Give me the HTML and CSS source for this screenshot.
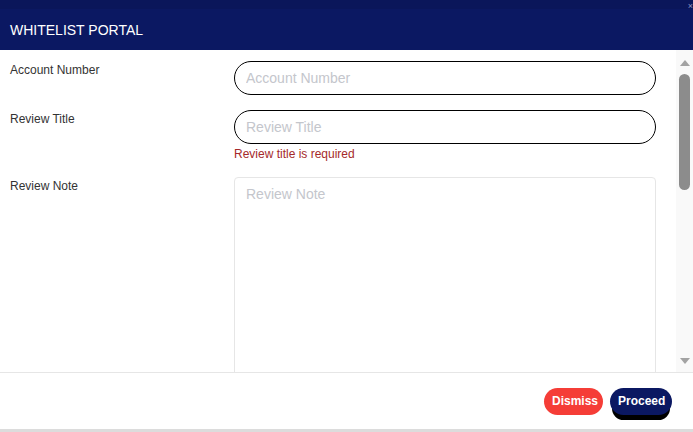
FILE: index.html
```html
<!DOCTYPE html>
<html lang="en">
<head>
    <meta charset="UTF-8">
    <meta name="viewport" content="width=device-width, initial-scale=1.0">
    <title>Whitelist Portal</title>
    <link rel="stylesheet" href="styles.css">
</head>
<body>
    <div class="modal">
        <div class="modal-header">
            <span class="modal-title">WHITELIST PORTAL</span>
            <span class="modal-close">&times;</span>
        </div>
        <div class="modal-body">
            <form class="review-form">
                <div class="form-row">
                    <label class="form-label">Account Number</label>
                    <div class="form-field">
                        <input class="form-input" type="text" placeholder="Account Number">
                    </div>
                </div>
                <div class="form-row">
                    <label class="form-label">Review Title</label>
                    <div class="form-field">
                        <input class="form-input" type="text" placeholder="Review Title">
                        <div class="form-error">Review title is required</div>
                    </div>
                </div>
                <div class="form-row">
                    <label class="form-label">Review Note</label>
                    <div class="form-field">
                        <textarea class="form-textarea" placeholder="Review Note"></textarea>
                    </div>
                </div>
            </form>
            <!-- scrollbar -->
            <div class="scrollbar">
                <span class="scroll-arrow up"></span>
                <div class="scroll-track"><div class="scroll-thumb"></div></div>
                <span class="scroll-arrow down"></span>
            </div>
        </div>
        <div class="modal-footer">
            <button class="btn btn-dismiss" type="button">Dismiss</button>
            <button class="btn btn-proceed" type="button">Proceed</button>
        </div>
    </div>
</body>
</html>
```

FILE: styles.css
```css
* {
    margin: 0;
    padding: 0;
    box-sizing: border-box;
}
body {
    font-family: "Liberation Sans", Arial, sans-serif;
    background: #fff;
    width: 693px;
    height: 432px;
    overflow: hidden;
}
.modal {
    display: flex;
    flex-direction: column;
    height: 432px;
    border-bottom: 3px solid #dcdcdc;
}
.modal-header {
    height: 50px;
    flex: none;
    background: #0b1862;
    border-top: 9px solid #0a165a;
    display: flex;
    align-items: center;
    padding-left: 10px;
    position: relative;
}
.modal-title {
    color: #fff;
    font-family: "Liberation Sans", Arial, sans-serif;
    font-size: 14px;
}
.modal-close {
    position: absolute;
    right: 0;
    top: -8px;
    color: #8f95c0;
    font-size: 9px;
}
.modal-body {
    flex: 1;
    display: flex;
    overflow: hidden;
}
.review-form {
    flex: 1;
    padding: 11px 20px 0 10px;
}
.form-row {
    display: flex;
    margin-bottom: 15px;
}
.form-label {
    width: 224px;
    flex: none;
    font-size: 12px;
    color: #333;
    padding-top: 2px;
    line-height: 15px;
}
.form-field {
    flex: 1;
}
.form-input {
    display: block;
    width: 100%;
    height: 34px;
    border: 1px solid #000;
    border-radius: 17px;
    padding: 0 11px;
    font-family: "Liberation Sans", Arial, sans-serif;
    font-size: 14px;
    outline: none;
}
.form-input::placeholder,
.form-textarea::placeholder {
    color: #c4c6cc;
}
.form-error {
    color: #a52a2a;
    font-size: 12px;
    line-height: 15px;
    margin-top: 3px;
}
.form-textarea {
    display: block;
    width: 100%;
    height: 220px;
    border: 1px solid #e6e6e6;
    border-radius: 4px;
    padding: 8px 11px;
    font-family: "Liberation Sans", Arial, sans-serif;
    font-size: 14px;
    resize: none;
    outline: none;
}
.scrollbar {
    width: 17px;
    flex: none;
    background: #f9f9f9;
    display: flex;
    flex-direction: column;
    align-items: center;
    padding: 10px 0 8px;
}
.scroll-arrow {
    width: 0;
    height: 0;
    border-left: 5px solid transparent;
    border-right: 5px solid transparent;
}
.scroll-arrow.up {
    border-bottom: 6px solid #a3a3a3;
}
.scroll-arrow.down {
    border-top: 6px solid #a3a3a3;
}
.scroll-track {
    flex: 1;
    padding-top: 8px;
}
.scroll-thumb {
    width: 11px;
    height: 116px;
    background: #8c8c8c;
    border-radius: 6px;
}
.modal-footer {
    height: 57px;
    flex: none;
    border-top: 1px solid #e6e6e6;
    display: flex;
    justify-content: flex-end;
    align-items: center;
    gap: 7px;
    padding: 0 21px 0 0;
}
.btn {
    height: 27px;
    border: none;
    border-radius: 14px;
    color: #fff;
    font-family: "Liberation Sans", Arial, sans-serif;
    font-size: 12px;
    font-weight: bold;
    padding: 0 8px;
}
.btn-dismiss {
    width: 59px;
    background: #f53d37;
}
.btn-proceed {
    width: 62px;
    background: #0b1862;
    box-shadow: 0 7px 0 -2px #000;
}
```
